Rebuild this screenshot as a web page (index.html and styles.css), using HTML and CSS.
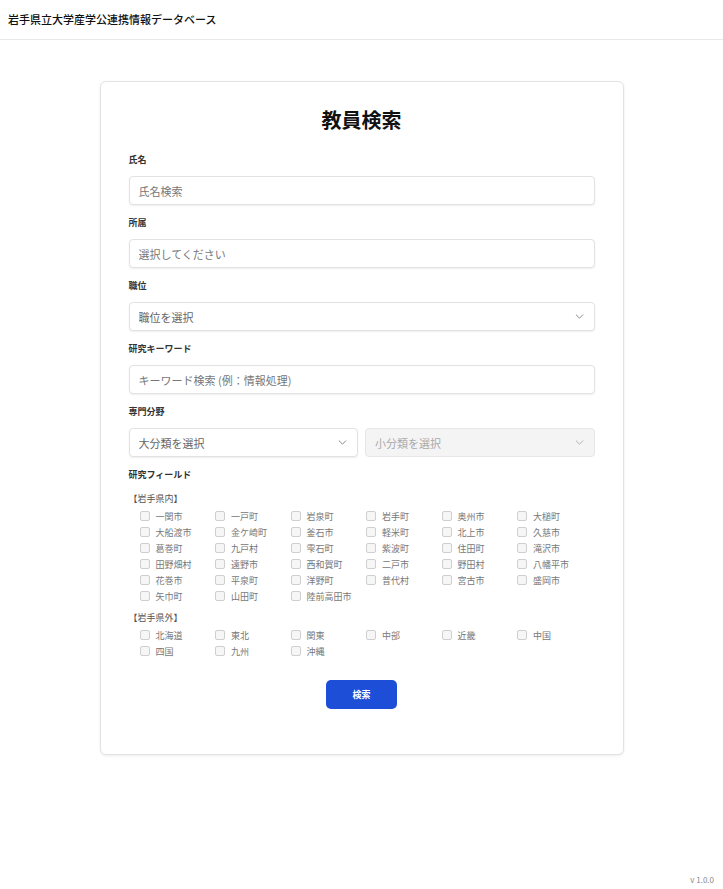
FILE: index.html
```html
<!DOCTYPE html>
<html lang="ja">
<head>
<meta charset="utf-8">
<title>教員検索</title>
<link rel="stylesheet" href="styles.css">
</head>
<body>
<header class="topbar">岩手県立大学産学公連携情報データベース</header>
<main class="main">
  <section class="card">
    <h1 class="title">教員検索</h1>
    <div class="field">
      <label class="label">氏名</label>
      <input class="control" type="text" placeholder="氏名検索">
    </div>
    <div class="field">
      <label class="label">所属</label>
      <input class="control" type="text" placeholder="選択してください">
    </div>
    <div class="field">
      <label class="label">職位</label>
      <div class="select-wrap">
        <select class="control select"><option>職位を選択</option></select>
        <svg class="chev" viewBox="0 0 10 6" width="9" height="5"><path d="M1 1l4 4 4-4" fill="none" stroke="#8a8a8a" stroke-width="1.2" stroke-linecap="round" stroke-linejoin="round"/></svg>
      </div>
    </div>
    <div class="field">
      <label class="label">研究キーワード</label>
      <input class="control" type="text" placeholder="キーワード検索 (例：情報処理)">
    </div>
    <div class="field">
      <label class="label">専門分野</label>
      <div class="pair">
        <div class="select-wrap">
          <select class="control select"><option>大分類を選択</option></select>
          <svg class="chev" viewBox="0 0 10 6" width="9" height="5"><path d="M1 1l4 4 4-4" fill="none" stroke="#8a8a8a" stroke-width="1.2" stroke-linecap="round" stroke-linejoin="round"/></svg>
        </div>
        <div class="select-wrap">
          <select class="control select disabled" disabled><option>小分類を選択</option></select>
          <svg class="chev" viewBox="0 0 10 6" width="9" height="5"><path d="M1 1l4 4 4-4" fill="none" stroke="#b0b0b0" stroke-width="1.2" stroke-linecap="round" stroke-linejoin="round"/></svg>
        </div>
      </div>
    </div>
    <div class="field fields-area">
      <label class="label">研究フィールド</label>
      <div class="group-title">【岩手県内】</div>
      <div class="checks">
        <label class="check"><span class="box"></span>一関市</label>
        <label class="check"><span class="box"></span>一戸町</label>
        <label class="check"><span class="box"></span>岩泉町</label>
        <label class="check"><span class="box"></span>岩手町</label>
        <label class="check"><span class="box"></span>奥州市</label>
        <label class="check"><span class="box"></span>大槌町</label>
        <label class="check"><span class="box"></span>大船渡市</label>
        <label class="check"><span class="box"></span>金ケ崎町</label>
        <label class="check"><span class="box"></span>釜石市</label>
        <label class="check"><span class="box"></span>軽米町</label>
        <label class="check"><span class="box"></span>北上市</label>
        <label class="check"><span class="box"></span>久慈市</label>
        <label class="check"><span class="box"></span>葛巻町</label>
        <label class="check"><span class="box"></span>九戸村</label>
        <label class="check"><span class="box"></span>雫石町</label>
        <label class="check"><span class="box"></span>紫波町</label>
        <label class="check"><span class="box"></span>住田町</label>
        <label class="check"><span class="box"></span>滝沢市</label>
        <label class="check"><span class="box"></span>田野畑村</label>
        <label class="check"><span class="box"></span>遠野市</label>
        <label class="check"><span class="box"></span>西和賀町</label>
        <label class="check"><span class="box"></span>二戸市</label>
        <label class="check"><span class="box"></span>野田村</label>
        <label class="check"><span class="box"></span>八幡平市</label>
        <label class="check"><span class="box"></span>花巻市</label>
        <label class="check"><span class="box"></span>平泉町</label>
        <label class="check"><span class="box"></span>洋野町</label>
        <label class="check"><span class="box"></span>普代村</label>
        <label class="check"><span class="box"></span>宮古市</label>
        <label class="check"><span class="box"></span>盛岡市</label>
        <label class="check"><span class="box"></span>矢巾町</label>
        <label class="check"><span class="box"></span>山田町</label>
        <label class="check"><span class="box"></span>陸前高田市</label>
      </div>
      <div class="group-title outside">【岩手県外】</div>
      <div class="checks">
        <label class="check"><span class="box"></span>北海道</label>
        <label class="check"><span class="box"></span>東北</label>
        <label class="check"><span class="box"></span>関東</label>
        <label class="check"><span class="box"></span>中部</label>
        <label class="check"><span class="box"></span>近畿</label>
        <label class="check"><span class="box"></span>中国</label>
        <label class="check"><span class="box"></span>四国</label>
        <label class="check"><span class="box"></span>九州</label>
        <label class="check"><span class="box"></span>沖縄</label>
      </div>
    </div>
    <div class="actions">
      <button class="btn" type="button">検索</button>
    </div>
  </section>
</main>
<footer class="footer">v 1.0.0</footer>
</body>
</html>
```
FILE: styles.css
```css
* { box-sizing: border-box; }
html, body { margin: 0; padding: 0; }
body {
  font-family: "Noto Sans CJK JP", "Noto Sans", sans-serif;
  color: #111;
  background: #fff;
  min-height: 100vh;
  display: flex;
  flex-direction: column;
}
.topbar {
  height: 40px;
  display: flex;
  align-items: center;
  padding: 0 8px 2px;
  font-size: 11px;
  font-weight: 500;
  color: #111;
  border-bottom: 1px solid #e8e8e8;
}
.main {
  padding-top: 41px;
  display: flex;
  justify-content: center;
}
.card {
  width: 524px;
  border: 1px solid #e3e3e3;
  border-radius: 6px;
  box-shadow: 0 1px 3px rgba(0,0,0,0.08);
  padding: 24px 28px 45px;
  background: #fff;
}
.title {
  margin: 0 0 19px;
  text-align: center;
  font-size: 20px;
  line-height: 28px;
  font-weight: 700;
  color: #111;
}
.field {
  display: flex;
  flex-direction: column;
  margin-bottom: 11px;
}
.label {
  font-size: 9px;
  line-height: 13px;
  font-weight: 700;
  color: #333;
  margin-bottom: 10px;
}
.control {
  width: 100%;
  height: 29px;
  border: 1px solid #e2e2e2;
  border-radius: 4px;
  box-shadow: 0 1px 2px rgba(0,0,0,0.07);
  padding: 0 9px;
  font-family: inherit;
  font-size: 11px;
  color: #666;
  background: #fff;
  outline: none;
}
.control::placeholder { color: #777; }
.select-wrap {
  position: relative;
  flex: 1;
}
.select {
  appearance: none;
  -webkit-appearance: none;
  color: #666;
}
.select.disabled {
  background: #f4f4f5;
  color: #aaa;
  box-shadow: none;
  border-color: #e6e6e6;
  opacity: 1;
}
.chev {
  position: absolute;
  right: 11px;
  top: 12px;
  pointer-events: none;
}
.pair {
  display: flex;
  gap: 7px;
}
.fields-area .label { margin-bottom: 11px; }
.group-title {
  font-size: 9px;
  line-height: 13px;
  color: #555;
  margin-bottom: 3px;
}
.group-title.outside { margin-top: 7px; }
.checks {
  display: grid;
  grid-template-columns: repeat(6, 75.5px);
  grid-auto-rows: 16px;
  padding-left: 11px;
}
.check {
  display: flex;
  align-items: center;
  gap: 6px;
  font-size: 9px;
  color: #777;
  white-space: nowrap;
}
.box {
  width: 10px;
  height: 10px;
  border: 1px solid #cfcfcf;
  border-radius: 2px;
  background: #f6f6f6;
  flex: none;
}
.actions {
  display: flex;
  justify-content: center;
  padding-top: 10px;
}
.btn {
  width: 71px;
  height: 29px;
  border: none;
  border-radius: 5px;
  background: #1d4ed8;
  color: #fff;
  font-family: inherit;
  font-size: 9px;
  font-weight: 700;
}
.footer {
  margin-top: auto;
  text-align: right;
  font-size: 8px;
  line-height: 10px;
  color: #888;
  padding: 0 9px 4px;
}
```
